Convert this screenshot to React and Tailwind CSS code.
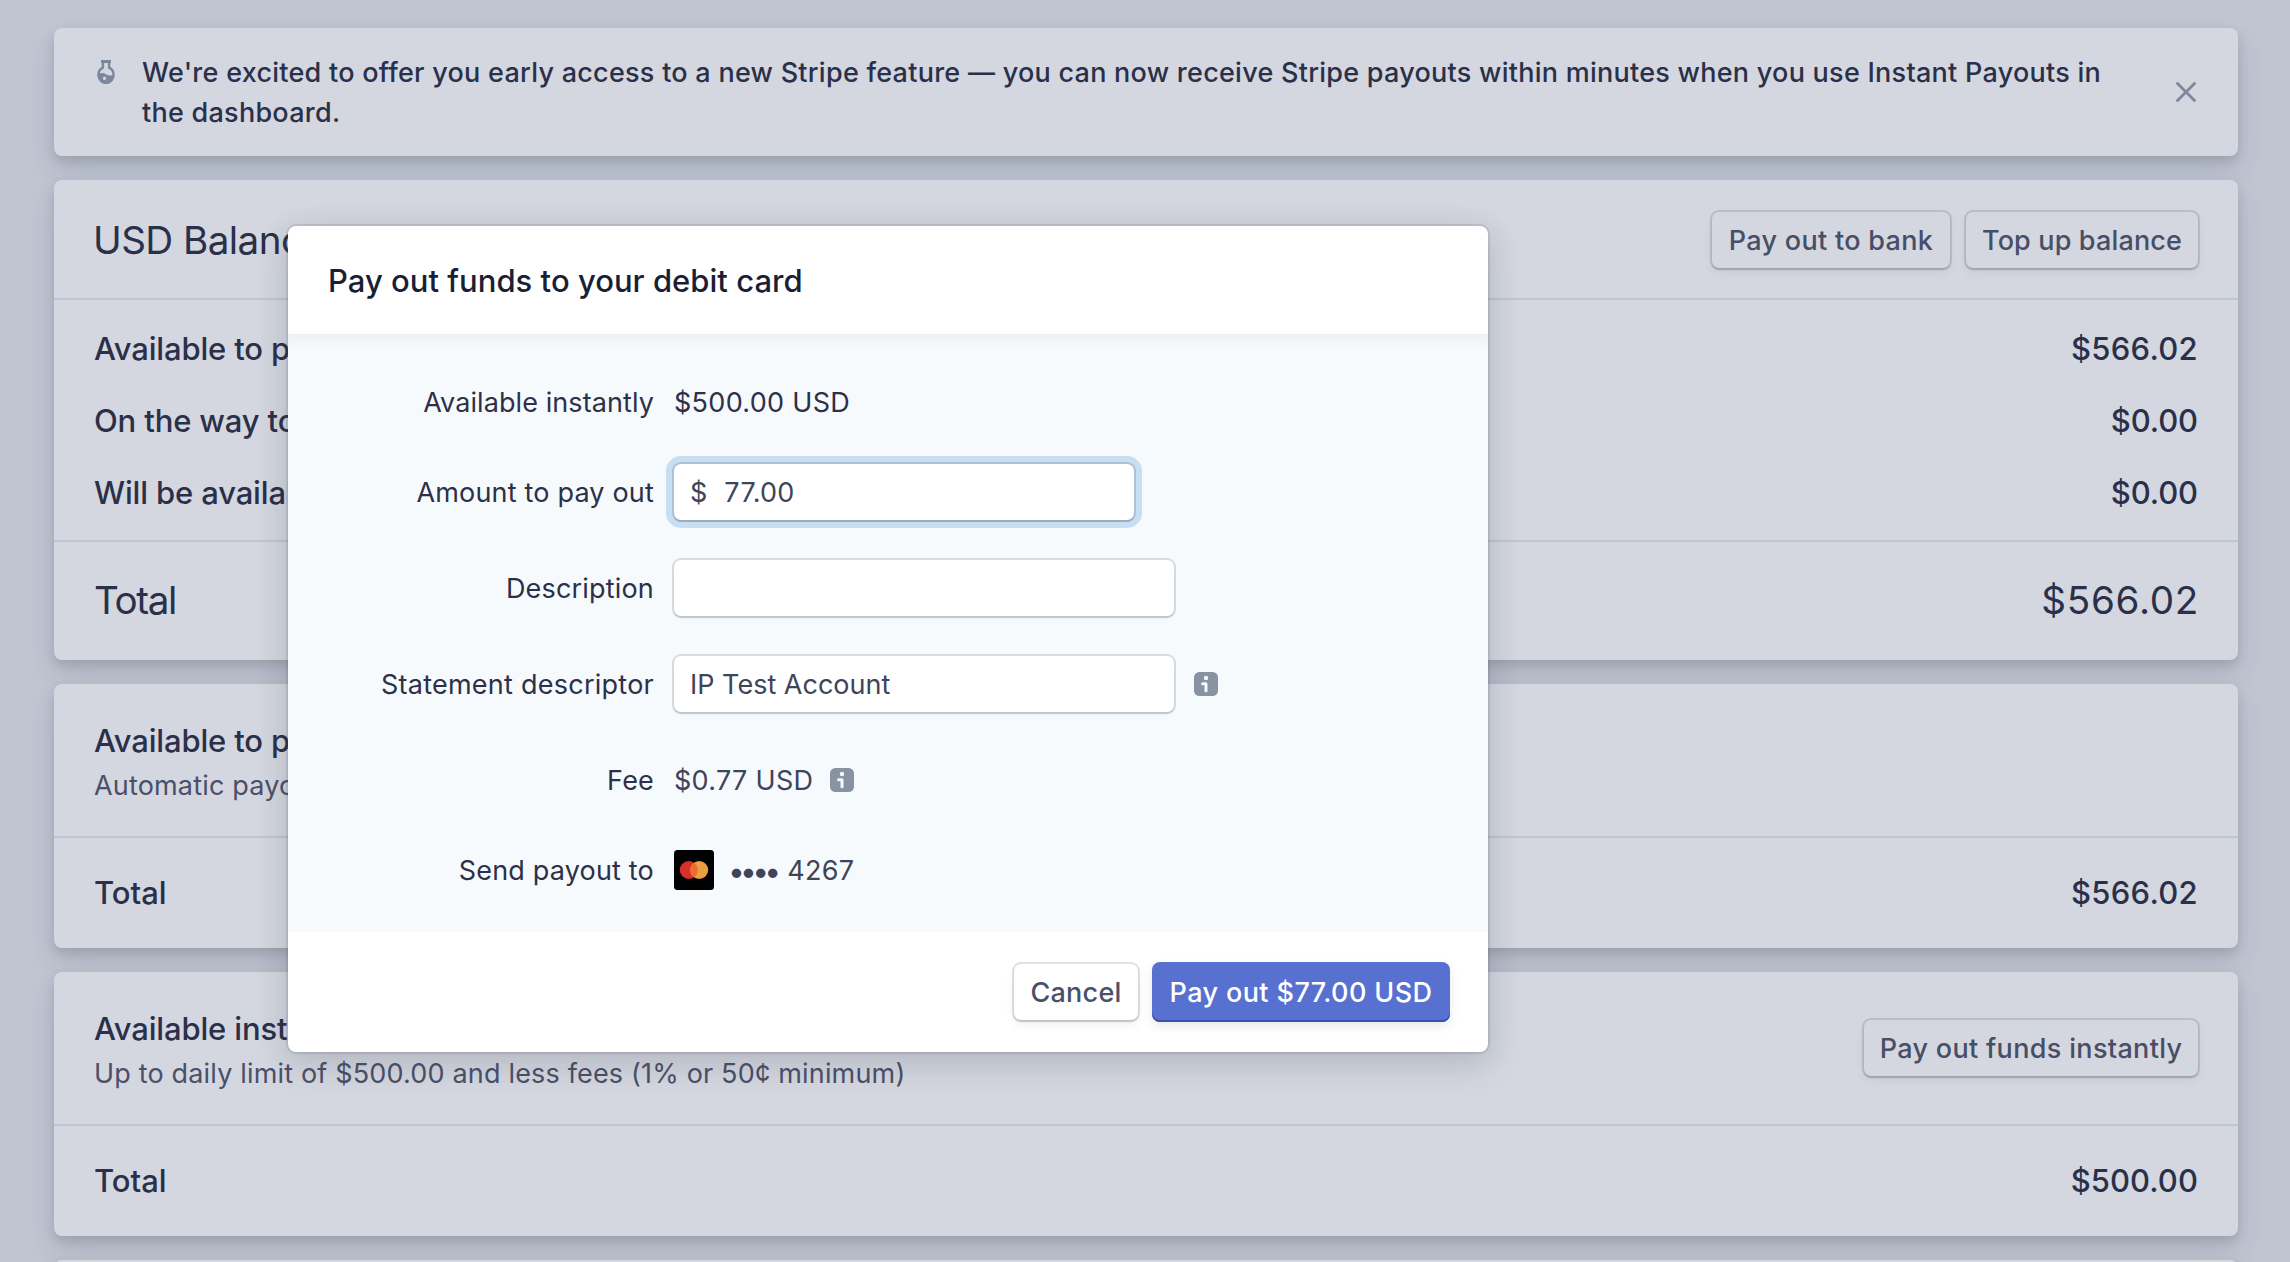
const CARD =
  "rounded-lg bg-[#d4d7df] shadow-[0_14px_28px_0_rgba(60,66,87,0.12),0_6px_12px_0_rgba(0,0,0,0.12)]";

function FlaskIcon() {
  return (
    <svg className="h-6 w-[18px]" viewBox="0 0 18 24" fill="none">
      <path d="M4 1.5H14" stroke="#7d879b" strokeWidth="3" />
      <path
        d="M5.9 2V7.6C3.2 8.8 1.4 11.7 1.4 15A7.6 7.6 0 0 0 16.6 15C16.6 11.7 14.8 8.8 12.1 7.6V2"
        stroke="#7d879b"
        strokeWidth="2.4"
      />
      <path
        fillRule="evenodd"
        d="M1 14.6C4 12.6 6.6 12.6 9 14.2C11.2 15.7 14 15.8 17 14.4V16A8 8 0 0 1 1 16ZM9.2 18.2A1.7 1.7 0 1 0 5.8 18.2A1.7 1.7 0 1 0 9.2 18.2Z"
        fill="#7d879b"
      />
    </svg>
  );
}

function CloseIcon() {
  return (
    <svg className="size-5" viewBox="0 0 20 20" fill="none">
      <path d="M1.5 1.5L18.5 18.5M18.5 1.5L1.5 18.5" stroke="#7d879b" strokeWidth="2.8" strokeLinecap="round" />
    </svg>
  );
}

function InfoIcon() {
  return (
    <svg className="size-6" viewBox="0 0 24 24" fill="none">
      <rect width="24" height="24" rx="5.5" fill="#8792a2" />
      <circle cx="12" cy="6" r="2.2" fill="#f7fafc" />
      <path d="M8.6 11.8H12V18.8" stroke="#f7fafc" strokeWidth="3" strokeLinecap="round" strokeLinejoin="round" />
    </svg>
  );
}

function MastercardIcon() {
  return (
    <svg className="size-10" viewBox="0 0 40 40">
      <rect width="40" height="40" rx="3.5" fill="#000" />
      <circle cx="14.8" cy="20" r="9" fill="#d9302c" />
      <circle cx="25.2" cy="20" r="9" fill="#e9a040" />
      <path d="M20 12.65A9 9 0 0 1 20 27.35A9 9 0 0 1 20 12.65Z" fill="#ee6c2e" />
    </svg>
  );
}

function GhostButton({ className, children }) {
  return (
    <button
      className={
        "h-14 rounded-[7px] pt-0.5 text-[27px] font-medium text-[#474e66] bg-[#d4d7df] shadow-[0_0_0_2px_rgba(60,66,87,0.16),0_2px_2px_0_rgba(0,0,0,0.12),0_4px_10px_0_rgba(60,66,87,0.08)] whitespace-nowrap " +
        className
      }
    >
      {children}
    </button>
  );
}

function BalanceRow({ label, amount }) {
  return (
    <div className="flex h-[72px] items-center justify-between text-[31px] font-medium">
      <span className="tracking-[-0.15px]">{label}</span>
      <span className={amount.length > 5 ? "tracking-[0.3px]" : "tracking-[-0.1px]"}>{amount}</span>
    </div>
  );
}

function PayoutCard({ title, subtitle, action, total, totalClass }) {
  return (
    <section className={CARD + " h-[264px]"}>
      <div className="flex h-[154px] items-center justify-between border-b-2 border-[#c0c5d2] px-10">
        <div className="pt-1">
          <div className="text-[31px] leading-[44px] font-medium tracking-[-0.15px]">{title}</div>
          <div className="-mb-0.5 pt-px text-[27px] leading-[43px] tracking-[0.17px] text-[#4a5069]">{subtitle}</div>
        </div>
        {action}
      </div>
      <div className="flex h-[110px] items-center justify-between px-10 text-[31px] font-medium">
        <span>Total</span>
        <span className={totalClass}>{total}</span>
      </div>
    </section>
  );
}

function Field({ label, className, labelClass = "tracking-[0.18px]", children }) {
  return (
    <div className={"flex items-center text-[27px] " + className}>
      <label className={"w-[366px] pt-0.5 text-right text-[#2c3048] " + labelClass}>{label}</label>
      <div className="ml-5 flex items-center text-[#3f4459]">{children}</div>
    </div>
  );
}

const INPUT =
  "flex h-14 items-center rounded-[7px] bg-white shadow-[0_0_0_2px_rgba(60,66,87,0.16),0_2px_2px_0_rgba(0,0,0,0.12)]";

function PayoutModal() {
  return (
    <div
      role="dialog"
      className="absolute top-[226px] left-[288px] w-[1200px] rounded-lg bg-white shadow-[0_0_0_2px_rgba(60,66,87,0.13),0_14px_36px_0_rgba(60,66,87,0.13),0_4px_30px_0_rgba(60,66,87,0.12)]"
    >
      <header className="flex h-[108px] items-center px-10 pt-[3px]">
        <h2 className="text-[31px] font-medium tracking-[0.02px] text-[#1a1f36]">Pay out funds to your debit card</h2>
      </header>
      <div className="h-[598px] bg-[#f6fafd] pt-12 shadow-[inset_0_14px_14px_-10px_rgba(60,66,87,0.07)]">
        <Field label="Available instantly" labelClass="tracking-[0.09px]" className="h-10">
          <span className="pt-0.5 tracking-[0.3px] text-[#2c3048]">$500.00 USD</span>
        </Field>
        <Field label="Amount to pay out" className="mt-[42px] h-14">
          <div className="flex h-14 w-[460px] items-center rounded-[7px] bg-white pl-4 shadow-[0_2px_1px_0_rgba(60,66,87,0.18),0_0_0_2px_rgba(60,66,87,0.18),0_0_0_8px_#c8def1]">
            <span className="pt-0.5">$</span>
            <span className="ml-[17px] pt-0.5 tracking-[0.3px]">77.00</span>
          </div>
        </Field>
        <Field label="Description" className="mt-10 h-14">
          <div className={INPUT + " w-[500px]"} />
        </Field>
        <Field label="Statement descriptor" labelClass="tracking-[0.25px]" className="mt-10 h-14">
          <div className={INPUT + " w-[500px] pt-0.5 pl-4"}>IP Test Account</div>
          <span className="ml-5">
            <InfoIcon />
          </span>
        </Field>
        <Field label="Fee" className="mt-10 h-14">
          <span className="pt-0.5 tracking-[0.3px]">$0.77 USD</span>
          <span className="ml-[17px]">
            <InfoIcon />
          </span>
        </Field>
        <Field label="Send payout to" className="mt-[42px] h-10">
          <MastercardIcon />
          <span className="ml-[14px] pt-0.5 text-[30px] leading-10 tracking-[-4.8px]">••••</span>
          <span className="ml-[11px] pt-0.5 tracking-[0.3px]">4267</span>
        </Field>
      </div>
      <footer className="flex h-[120px] items-center justify-end gap-3 pr-[38px]">
        <button className="mr-0.5 h-14 w-[124px] rounded-[7px] bg-white pt-0.5 text-[27px] font-medium tracking-[0.24px] text-[#4a5068] shadow-[0_0_0_2px_rgba(60,66,87,0.14),0_2px_2px_0_rgba(0,0,0,0.12),0_4px_10px_0_rgba(60,66,87,0.08)]">
          Cancel
        </button>
        <button className="h-[60px] w-[298px] rounded-lg bg-[#5870d0] pt-0.5 text-[27px] font-medium tracking-[0.4px] whitespace-nowrap text-white shadow-[inset_0_-2px_0_0_#3a50ad,0_4px_10px_0_rgba(60,66,87,0.12)]">
          Pay out $77.00 USD
        </button>
      </footer>
    </div>
  );
}

export default function App() {
  return (
    <div className="relative h-[1262px] w-[2290px] overflow-hidden bg-[#bfc5d1] font-['Inter',sans-serif] text-[#2a3049]">
      <main className="flex flex-col gap-6 pt-7 pr-[52px] pl-[54px]">
        <section className={CARD + " flex h-32 items-start pr-[42px]"}>
          <span className="mt-8 ml-[43px]">
            <FlaskIcon />
          </span>
          <p className="mt-[25px] ml-[27px] w-[1990px] text-[27px] leading-10 font-medium tracking-[0.26px]">
            We're excited to offer you early access to a new Stripe feature — you can now receive Stripe payouts within
            minutes when you use Instant Payouts in the dashboard.
          </p>
          <button className="mt-[54px] ml-auto shrink-0">
            <CloseIcon />
          </button>
        </section>

        <section className={CARD + " h-[480px]"}>
          <div className="flex h-[120px] items-center pr-10 pl-[39px] shadow-[inset_0_-2px_0_0_#c0c5d2]">
            <h1 className="grow pt-0.5 text-[38.6px] tracking-[-0.55px]">USD Balance</h1>
            <GhostButton className="w-[238px] tracking-[0.3px]">Pay out to bank</GhostButton>
            <GhostButton className="ml-4 w-[232px] tracking-[0.15px]">Top up balance</GhostButton>
          </div>
          <div className="h-[240px] px-10 pt-[13px]">
            <BalanceRow label="Available to pay out" amount="$566.02" />
            <BalanceRow label="On the way to your bank" amount="$0.00" />
            <BalanceRow label="Will be available soon" amount="$0.00" />
          </div>
          <div className="flex h-[120px] items-center justify-between pt-0.5 pr-[39px] pl-10 text-[38.6px] shadow-[inset_0_2px_0_0_#c0c5d2]">
            <span className="tracking-[-1.4px]">Total</span>
            <span className="tracking-[0.7px]">$566.02</span>
          </div>
        </section>

        <PayoutCard
          title="Available to pay out"
          subtitle="Automatic payouts"
          total="$566.02"
          totalClass="tracking-[0.3px]"
        />
        <PayoutCard
          title="Available instantly"
          subtitle="Up to daily limit of $500.00 and less fees (1% or 50¢ minimum)"
          total="$500.00"
          totalClass="tracking-[0.05px]"
          action={<GhostButton className="w-[334px] tracking-[0.33px]">Pay out funds instantly</GhostButton>}
        />
        <section className={CARD + " h-10"} />
      </main>
      <PayoutModal />
    </div>
  );
}
